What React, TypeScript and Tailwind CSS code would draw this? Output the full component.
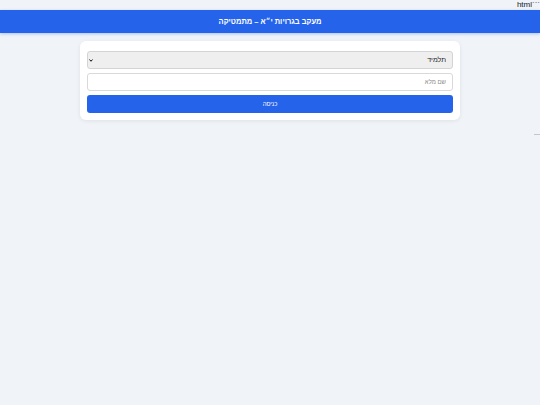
import { useState } from "react";

export default function App() {
    const [role, setRole] = useState<string>("student");
    const [name, setName] = useState<string>("");

    return (
        <div
            dir="rtl"
            className="min-h-screen bg-[#f0f4f9] text-[#111827]"
            style={{ fontFamily: '"Liberation Sans", Arial, "DejaVu Sans", sans-serif' }}
        >
            <p className="h-[10px] text-[8px] leading-[10px]">```html</p>
            <header className="h-[23px] flex items-center justify-center bg-[#2563eb] text-white shadow-[0_1px_3px_rgba(37,99,235,0.35)]">
                <h1 className="text-[7.5px] font-bold">מעקב בגרויות י״א – מתמטיקה</h1>
            </header>
            <main className="pt-[8px]">
                <div className="mx-auto w-[380px] bg-white rounded-[6px] shadow-[0_1px_4px_rgba(0,0,0,0.08)] pt-[10px] pb-[7px] px-[7px] flex flex-col gap-[4px]">
                    <div className="relative h-[18px]">
                        <select
                            value={role}
                            onChange={(e) => setRole(e.target.value)}
                            className="block appearance-none h-[18px] w-full bg-[#efefef] border border-[#d4d4d4] rounded-[3px] px-[6px] text-[7px] leading-[16px] text-[#222]"
                        >
                            <option value="student">תלמיד</option>
                            <option value="teacher">מורה</option>
                        </select>
                        <svg className="absolute left-[2px] top-[8px] w-[4px] h-[3px] pointer-events-none" viewBox="0 0 8 6">
                            <path d="M1 1 L4 4.5 L7 1" fill="none" stroke="#111" strokeWidth="2" />
                        </svg>
                    </div>
                    <input
                        type="text"
                        value={name}
                        onChange={(e) => setName(e.target.value)}
                        placeholder="שם מלא"
                        className="block h-[18px] w-full bg-white border border-[#d9d9d9] rounded-[3px] px-[6px] text-[6px] placeholder:text-[#8a8a8a]"
                    />
                    <button
                        type="button"
                        className="block h-[18px] w-full bg-[#2563eb] rounded-[3px] text-white text-[6px]"
                    >
                        כניסה
                    </button>
                </div>
            </main>
            <p className="mt-[12px] text-[6px] leading-[8px]">```</p>
        </div>
    );
}
